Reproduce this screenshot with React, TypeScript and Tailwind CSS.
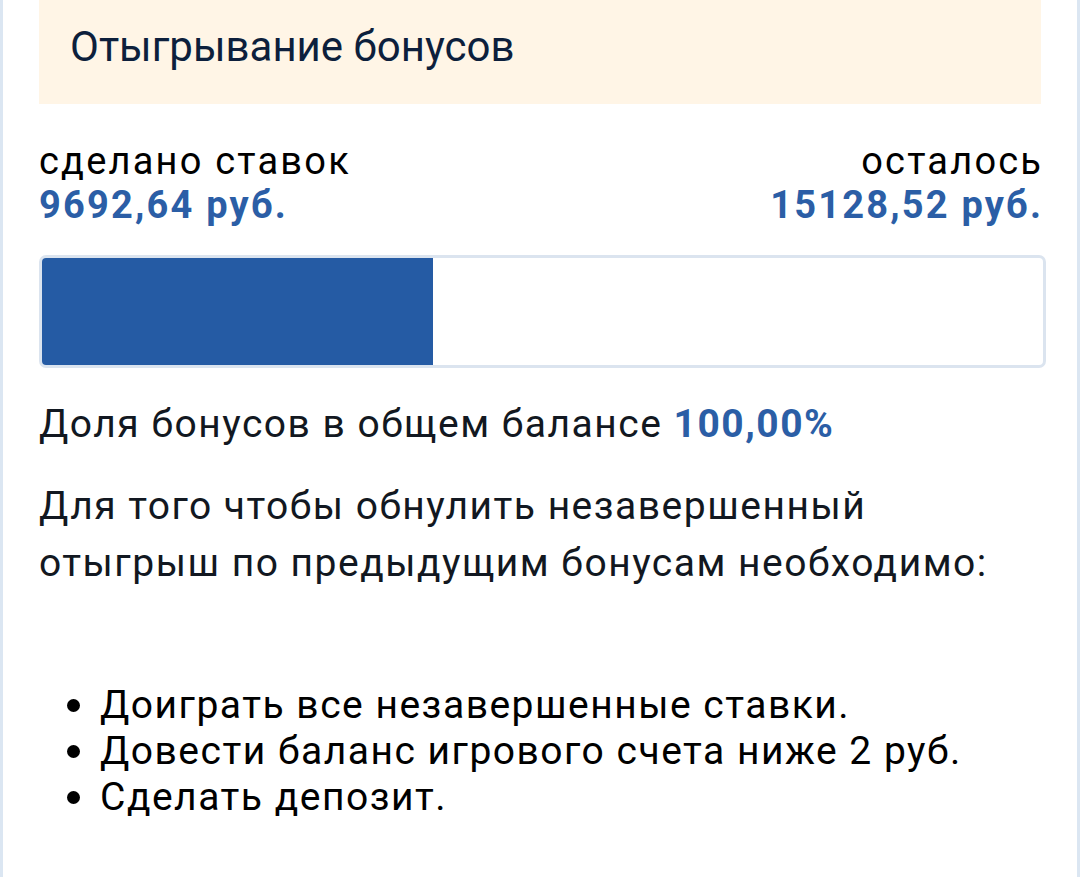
const items = [
  "Доиграть все незавершенные ставки.",
  "Довести баланс игрового счета ниже 2 руб.",
  "Сделать депозит.",
];

const BonusWagering = () => {
  const done = 9692.64;
  const left = 15128.52;
  const percent = (done / (done + left)) * 100;

  return (
    <div className="min-h-[877px] w-full bg-white border-x-[3px] border-[#dbe6f2] font-['Roboto',sans-serif]">
      <div className="px-[36px]">
        <div className="h-[104px] bg-[#fff5e6] flex items-center px-[31px] pb-[10px]">
          <h2 className="text-[42px] text-[#0d1f3c] leading-none">
            Отыгрывание бонусов
          </h2>
        </div>

        <div className="flex justify-between pt-[33px] tracking-[2.2px]">
          <div>
            <p className="text-[38px] leading-[48px] text-black">сделано ставок</p>
            <p className="text-[38px] leading-[40px] font-bold text-[#2b5ea6]">
              9692,64 руб.
            </p>
          </div>
          <div className="text-right mr-[-2.2px]">
            <p className="text-[38px] leading-[48px] text-black">осталось</p>
            <p className="text-[38px] leading-[40px] font-bold text-[#2b5ea6]">
              15128,52 руб.
            </p>
          </div>
        </div>

        <div className="mt-[30px] mr-[-5px] h-[113px] rounded-[7px] border-[3px] border-[#dbe4ef] bg-white overflow-hidden">
          <div className="h-full bg-[#255ba4]" style={{ width: `${percent}%` }} />
        </div>

        <div className="tracking-[1.5px]">
          <p className="mt-[30px] text-[39px] leading-[52px] text-[#121821]">
            Доля бонусов в общем балансе{" "}
            <span className="font-bold text-[#2b5ea6]">100,00%</span>
          </p>

          <p className="mt-[28px] text-[39px] leading-[57px] text-[#121821]">
            Для того чтобы обнулить незавершенный
            <br />
            отыгрыш по предыдущим бонусам необходимо:
          </p>

          <ul className="mt-[90px] pl-[28px]">
            {items.map((t) => (
              <li key={t} className="flex items-center text-[39px] leading-[46px] text-black">
                <span className="w-[13px] h-[13px] rounded-full bg-black mr-[20px] shrink-0" />
                {t}
              </li>
            ))}
          </ul>
        </div>
      </div>
    </div>
  );
};

export default function App() {
  return <BonusWagering />;
}
